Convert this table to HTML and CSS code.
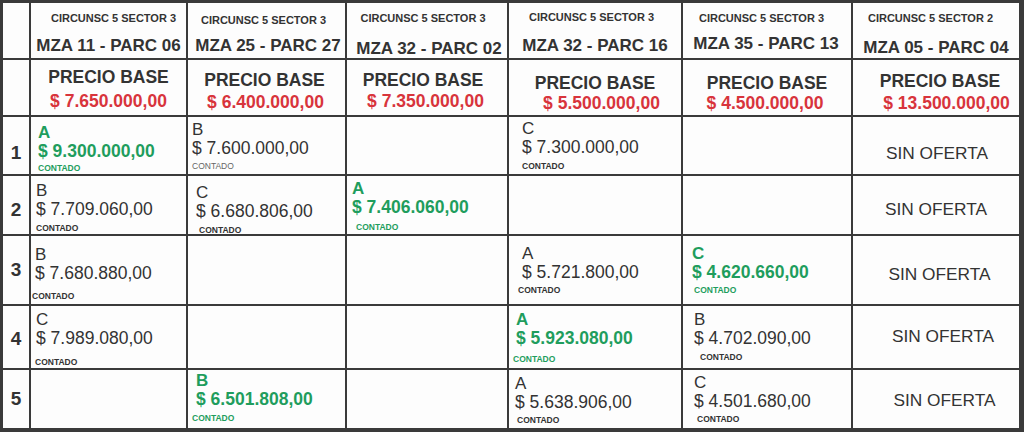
FILE: index.html
```html
<!DOCTYPE html>
<html lang="es">
<head>
<meta charset="utf-8">
<title>Ofertas</title>
<link rel="stylesheet" href="styles.css">
</head>
<body>
<div class="board">
  <!-- header row -->
  <div class="cell"></div>
  <div class="cell head h1"><div class="circ">CIRCUNSC 5 SECTOR 3</div><div class="mza">MZA 11 - PARC 06</div></div>
  <div class="cell head h2"><div class="circ">CIRCUNSC 5 SECTOR 3</div><div class="mza">MZA 25 - PARC 27</div></div>
  <div class="cell head h3"><div class="circ">CIRCUNSC 5 SECTOR 3</div><div class="mza">MZA 32 - PARC 02</div></div>
  <div class="cell head h4"><div class="circ">CIRCUNSC 5 SECTOR 3</div><div class="mza">MZA 32 - PARC 16</div></div>
  <div class="cell head h5"><div class="circ">CIRCUNSC 5 SECTOR 3</div><div class="mza">MZA 35 - PARC 13</div></div>
  <div class="cell head h6"><div class="circ">CIRCUNSC 5 SECTOR 2</div><div class="mza">MZA 05 - PARC 04</div></div>

  <!-- base price row -->
  <div class="cell"></div>
  <div class="cell phead p1"><div class="pb">PRECIO BASE</div><div class="base">$ 7.650.000,00</div></div>
  <div class="cell phead p2"><div class="pb">PRECIO BASE</div><div class="base">$ 6.400.000,00</div></div>
  <div class="cell phead p3"><div class="pb">PRECIO BASE</div><div class="base">$ 7.350.000,00</div></div>
  <div class="cell phead p4"><div class="pb">PRECIO BASE</div><div class="base">$ 5.500.000,00</div></div>
  <div class="cell phead p5"><div class="pb">PRECIO BASE</div><div class="base">$ 4.500.000,00</div></div>
  <div class="cell phead p6"><div class="pb">PRECIO BASE</div><div class="base">$ 13.500.000,00</div></div>

  <!-- row 1 -->
  <div class="cell num n-1">1</div>
  <div class="cell offer win o11"><div class="ltr">A</div><div class="amt">$ 9.300.000,00</div><div class="cont">CONTADO</div></div>
  <div class="cell offer o12"><div class="ltr">B</div><div class="amt">$ 7.600.000,00</div><div class="cont light">CONTADO</div></div>
  <div class="cell"></div>
  <div class="cell offer o14"><div class="ltr">C</div><div class="amt">$ 7.300.000,00</div><div class="cont">CONTADO</div></div>
  <div class="cell"></div>
  <div class="cell none s1">SIN OFERTA</div>

  <!-- row 2 -->
  <div class="cell num n-2">2</div>
  <div class="cell offer o21"><div class="ltr">B</div><div class="amt">$ 7.709.060,00</div><div class="cont">CONTADO</div></div>
  <div class="cell offer o22"><div class="ltr">C</div><div class="amt">$ 6.680.806,00</div><div class="cont">CONTADO</div></div>
  <div class="cell offer win o23"><div class="ltr">A</div><div class="amt">$ 7.406.060,00</div><div class="cont">CONTADO</div></div>
  <div class="cell"></div>
  <div class="cell"></div>
  <div class="cell none s2">SIN OFERTA</div>

  <!-- row 3 -->
  <div class="cell num n-3">3</div>
  <div class="cell offer o31"><div class="ltr">B</div><div class="amt">$ 7.680.880,00</div><div class="cont">CONTADO</div></div>
  <div class="cell"></div>
  <div class="cell"></div>
  <div class="cell offer o34"><div class="ltr">A</div><div class="amt">$ 5.721.800,00</div><div class="cont">CONTADO</div></div>
  <div class="cell offer win o35"><div class="ltr">C</div><div class="amt">$ 4.620.660,00</div><div class="cont">CONTADO</div></div>
  <div class="cell none s3">SIN OFERTA</div>

  <!-- row 4 -->
  <div class="cell num n-4">4</div>
  <div class="cell offer o41"><div class="ltr">C</div><div class="amt">$ 7.989.080,00</div><div class="cont">CONTADO</div></div>
  <div class="cell"></div>
  <div class="cell"></div>
  <div class="cell offer win o44"><div class="ltr">A</div><div class="amt">$ 5.923.080,00</div><div class="cont">CONTADO</div></div>
  <div class="cell offer o45"><div class="ltr">B</div><div class="amt">$ 4.702.090,00</div><div class="cont">CONTADO</div></div>
  <div class="cell none s4">SIN OFERTA</div>

  <!-- row 5 -->
  <div class="cell num n-5">5</div>
  <div class="cell"></div>
  <div class="cell offer win o52"><div class="ltr">B</div><div class="amt">$ 6.501.808,00</div><div class="cont">CONTADO</div></div>
  <div class="cell"></div>
  <div class="cell offer o54"><div class="ltr">A</div><div class="amt">$ 5.638.906,00</div><div class="cont">CONTADO</div></div>
  <div class="cell offer o55"><div class="ltr">C</div><div class="amt">$ 4.501.680,00</div><div class="cont">CONTADO</div></div>
  <div class="cell none s5">SIN OFERTA</div>
</div>
</body>
</html>
```

FILE: styles.css
```css
* { box-sizing: border-box; margin: 0; padding: 0; }
html, body { width: 1024px; height: 432px; overflow: hidden; background: #fff; }
body { font-family: "Liberation Sans", Arial, sans-serif; color: #333; }

.board {
  display: grid;
  grid-template-columns: 26px 155px 157px 160px 172px 168px 166px;
  grid-template-rows: 55px 55px 57px 58px 68px 62px 58px;
  gap: 2px;
  padding: 3px 5px 4px 3px;
  width: 1024px;
  height: 432px;
  background: #3a3a3a;
}
.cell { background: #fdfdfd; overflow: hidden; }

/* header: lot identification */
.head { display: flex; flex-direction: column; align-items: center; }
.circ { font-size: 11px; font-weight: 700; line-height: 13px; white-space: nowrap; }
.mza { font-size: 17px; font-weight: 700; line-height: 19px; white-space: nowrap; }
.h1 { padding-top: 9px; }
.h1 .circ { margin-left: 10px; }
.h1 .mza { margin-top: 11px; }
.h2 { padding-top: 11px; }
.h2 .circ { margin-right: 6px; }
.h2 .mza { margin-top: 9px; margin-left: 3px; }
.h3 { padding-top: 9px; }
.h3 .circ { margin-right: 8px; }
.h3 .mza { margin-top: 14px; margin-left: 4px; }
.h4 { padding-top: 8px; }
.h4 .circ { margin-right: 7px; }
.h4 .mza { margin-top: 12px; }
.h5 { padding-top: 9px; }
.h5 .circ { margin-right: 11px; }
.h5 .mza { margin-top: 9px; margin-right: 2px; }
.h6 { padding-top: 9px; }
.h6 .circ { margin-right: 11px; }
.h6 .mza { margin-top: 13px; }

/* base price row */
.phead { display: flex; flex-direction: column; align-items: center; }
.pb { font-size: 17.5px; font-weight: 700; line-height: 19px; white-space: nowrap; }
.base { font-size: 17.5px; font-weight: 700; line-height: 19px; white-space: nowrap; color: #d8343c; }
.p1 { padding-top: 8px; }
.p1 .base { margin-top: 5px; }
.p2 { padding-top: 11px; }
.p2 .pb { margin-right: 4px; }
.p2 .base { margin-top: 3px; margin-right: 2px; }
.p3 { padding-top: 11px; }
.p3 .pb { margin-right: 8px; }
.p3 .base { margin-top: 2px; margin-right: 3px; }
.p4 { padding-top: 14px; }
.p4 .base { margin-top: 1px; margin-left: 13px; }
.p5 { padding-top: 14px; }
.p5 .base { margin-top: 1px; margin-right: 4px; }
.p6 { padding-top: 12px; }
.p6 .pb { margin-left: 8px; }
.p6 .base { margin-top: 3px; margin-left: 21px; }

/* row numbers */
.num { text-align: center; font-size: 19px; font-weight: 700; line-height: 22px; }
.n-1 { padding-top: 25px; }
.n-2 { padding-top: 23px; }
.n-3 { padding-top: 23px; }
.n-4 { padding-top: 22px; }
.n-5 { padding-top: 18px; }

/* offers */
.ltr { font-size: 17px; line-height: 19px; }
.amt { font-size: 17.5px; line-height: 19px; white-space: nowrap; }
.cont { font-size: 8.5px; line-height: 10px; font-weight: 700; white-space: nowrap; }
.cont.light { font-weight: 400; color: #666; }
.win { color: #1f9d5d; }
.win .ltr, .win .amt { font-weight: 700; }

.o11 { padding: 6px 0 0 7px; }
.o11 .cont { margin-top: 2px; }
.o12 { padding: 3px 0 0 4px; }
.o12 .cont { margin-top: 3px; }
.o14 { padding: 2px 0 0 13px; }
.o14 .cont { margin-top: 4px; }
.o21 { padding: 5px 0 0 5px; }
.o21 .cont { margin-top: 4px; }
.o22 { padding: 7px 0 0 8px; }
.o22 .cont { margin-top: 4px; margin-left: 3px; }
.o23 { padding: 3px 0 0 5px; }
.o23 .cont { margin-top: 5px; margin-left: 4px; }
.o31 { padding: 9px 0 0 4px; }
.o31 .cont { margin-top: 8px; margin-left: -3px; }
.o34 { padding: 8px 0 0 13px; }
.o34 .cont { margin-top: 3px; margin-left: -4px; }
.o35 { padding: 8px 0 0 9px; }
.o35 .cont { margin-top: 3px; margin-left: 2px; }
.o41 { padding: 4px 0 0 5px; }
.o41 .cont { margin-top: 9px; margin-left: -1px; }
.o44 { padding: 4px 0 0 7px; }
.o44 .cont { margin-top: 6px; margin-left: -3px; }
.o45 { padding: 4px 0 0 11px; }
.o45 .cont { margin-top: 4px; margin-left: 6px; }
.o52 { padding: 1px 0 0 8px; }
.o52 .cont { margin-top: 4px; margin-left: -4px; }
.o54 { padding: 4px 0 0 6px; }
.o54 .cont { margin-top: 3px; margin-left: 2px; }
.o55 { padding: 3px 0 0 11px; }
.o55 .cont { margin-top: 3px; margin-left: 3px; }

/* no offer */
.none { text-align: center; font-size: 17.3px; line-height: 19px; white-space: nowrap; }
.s1 { padding: 27px 0 0 2px; }
.s2 { padding: 24px 0 0 0; }
.s3 { padding: 29px 0 0 7px; }
.s4 { padding: 21px 0 0 14px; }
.s5 { padding: 21px 0 0 17px; }
```
